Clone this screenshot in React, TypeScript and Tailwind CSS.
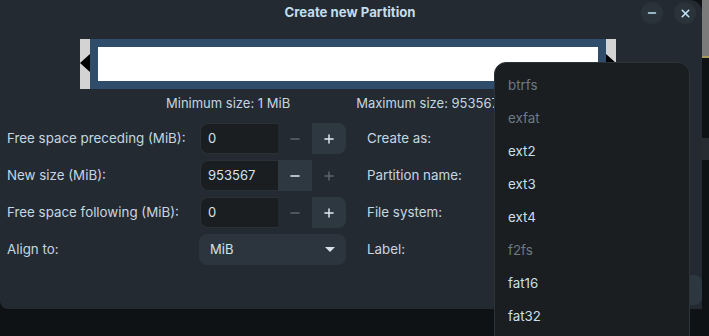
import { Minus, Plus, X } from "lucide-react";

const fsItems = [
  { name: "btrfs", enabled: false },
  { name: "exfat", enabled: false },
  { name: "ext2", enabled: true },
  { name: "ext3", enabled: true },
  { name: "ext4", enabled: true },
  { name: "f2fs", enabled: false },
  { name: "fat16", enabled: true },
  { name: "fat32", enabled: true },
];

function SpinBox({ value, minus, plus }: { value: string; minus: boolean; plus: boolean }) {
  return (
    <div className="flex h-[31px] w-[146px] text-[13px]">
      <div className="flex w-[78px] items-center rounded-l-lg border border-[#2a3136] border-r-0 bg-[#1a1e21] pl-[7px] text-[#d6e2ea]">
        {value}
      </div>
      <div
        className={`flex w-[34px] items-center justify-center ${
          minus ? "bg-[#2e3840] text-[#dfeaf2]" : "text-[#5b666e]"
        }`}
      >
        <Minus size={14} strokeWidth={2.5} />
      </div>
      <div
        className={`flex w-[34px] items-center justify-center rounded-r-lg ${
          plus ? "bg-[#2e3840] text-[#dfeaf2]" : "text-[#5b666e]"
        }`}
      >
        <Plus size={14} strokeWidth={2.5} />
      </div>
    </div>
  );
}

export default function App() {
  return (
    <div
      className="relative flex h-[336px] w-[709px] overflow-hidden bg-[#0f1214] text-[13px] text-[#c6d6e1]"
      style={{ fontFamily: "Inter, 'Noto Sans', sans-serif" }}
    >
      {/* dialog */}
      <div className="flex h-[309px] w-[702px] flex-col rounded-tr-[12px] rounded-bl-[8px] bg-[#232a31]">
        <div className="relative flex h-[26px] items-center justify-center">
          <span className="pr-[2px] text-[13.2px] font-bold text-[#c4dcec]">Create new Partition</span>
          <div className="absolute right-[6px] top-[2px] flex gap-[11px]">
            <div className="flex h-[22px] w-[22px] items-center justify-center rounded-full bg-[#2b333a] text-[#bfe0f5]">
              <Minus size={12} strokeWidth={3} />
            </div>
            <div className="flex h-[22px] w-[22px] items-center justify-center rounded-full bg-[#2b333a] text-[#bfe0f5]">
              <X size={13} strokeWidth={3} />
            </div>
          </div>
        </div>

        {/* partition bar */}
        <div className="ml-[80px] mt-[13px] flex h-[50px] w-[536px]">
          <div className="relative w-[10px] bg-[#d3d3d3]">
            <div className="absolute left-0 top-[15px] h-0 w-0 border-y-[9px] border-r-[10px] border-y-transparent border-r-black" />
          </div>
          <div className="flex flex-1 items-center bg-[#2f4d6a] px-[8px]">
            <div className="h-[34px] w-full bg-white" />
          </div>
          <div className="relative w-[10px] bg-[#d3d3d3]">
            <div className="absolute left-0 top-[15px] h-0 w-0 border-y-[9px] border-l-[10px] border-y-transparent border-l-black" />
          </div>
        </div>

        <div className="mt-[7px] flex h-[16px] items-center">
          <span className="ml-[166px]">Minimum size: 1 MiB</span>
          <span className="ml-[66px]">Maximum size: 953567 MiB</span>
        </div>

        <div className="mt-[11px] flex text-[13.35px]">
          <div className="flex flex-col gap-[6px] pl-[7px]">
            {[
              { label: "Free space preceding (MiB):", value: "0", minus: false, plus: true },
              { label: "New size (MiB):", value: "953567", minus: true, plus: false },
              { label: "Free space following (MiB):", value: "0", minus: false, plus: true },
            ].map((r) => (
              <div key={r.label} className="flex h-[31px] items-center">
                <span className="w-[193px]">{r.label}</span>
                <SpinBox value={r.value} minus={r.minus} plus={r.plus} />
              </div>
            ))}
            <div className="flex h-[31px] items-center">
              <span className="w-[192px]">Align to:</span>
              <div className="flex h-[31px] w-[147px] items-center justify-between rounded-lg bg-[#2c353d] pl-[11px] pr-[11px] text-[13px] text-[#d6e2ea]">
                <span>MiB</span>
                <div className="h-0 w-0 border-x-[5px] border-t-[5px] border-x-transparent border-t-[#d6e2ea]" />
              </div>
            </div>
          </div>
          <div className="ml-[21px] flex flex-col gap-[6px]">
            {["Create as:", "Partition name:", "File system:", "Label:"].map((l) => (
              <div key={l} className="flex h-[31px] items-center">
                {l}
              </div>
            ))}
          </div>
        </div>

        <div className="mt-auto mb-[4px] ml-auto h-[30px] w-[80px] rounded-lg bg-[#2c3740]" />
      </div>

      {/* background window edge */}
      <div className="flex w-[7px] flex-col">
        <div className="h-[56px] bg-[#7b7b7b]" />
        <div className="h-[2px] bg-[#a89a5a]" />
        <div className="h-[80px]" />
        <div className="h-[22px] bg-[#262c31]" />
      </div>

      {/* file system popup */}
      <div className="absolute left-[494px] top-[62px] h-[290px] w-[196px] rounded-t-[12px] border border-[#2c3439] bg-[#1a1e21] pt-[6px] text-[13.35px]">
        {fsItems.map((f) => (
          <div
            key={f.name}
            className={`flex h-[33px] items-center pl-[13px] ${
              f.enabled ? "text-[#cddfea]" : "text-[#6c7a83]"
            }`}
          >
            {f.name}
          </div>
        ))}
      </div>
    </div>
  );
}
